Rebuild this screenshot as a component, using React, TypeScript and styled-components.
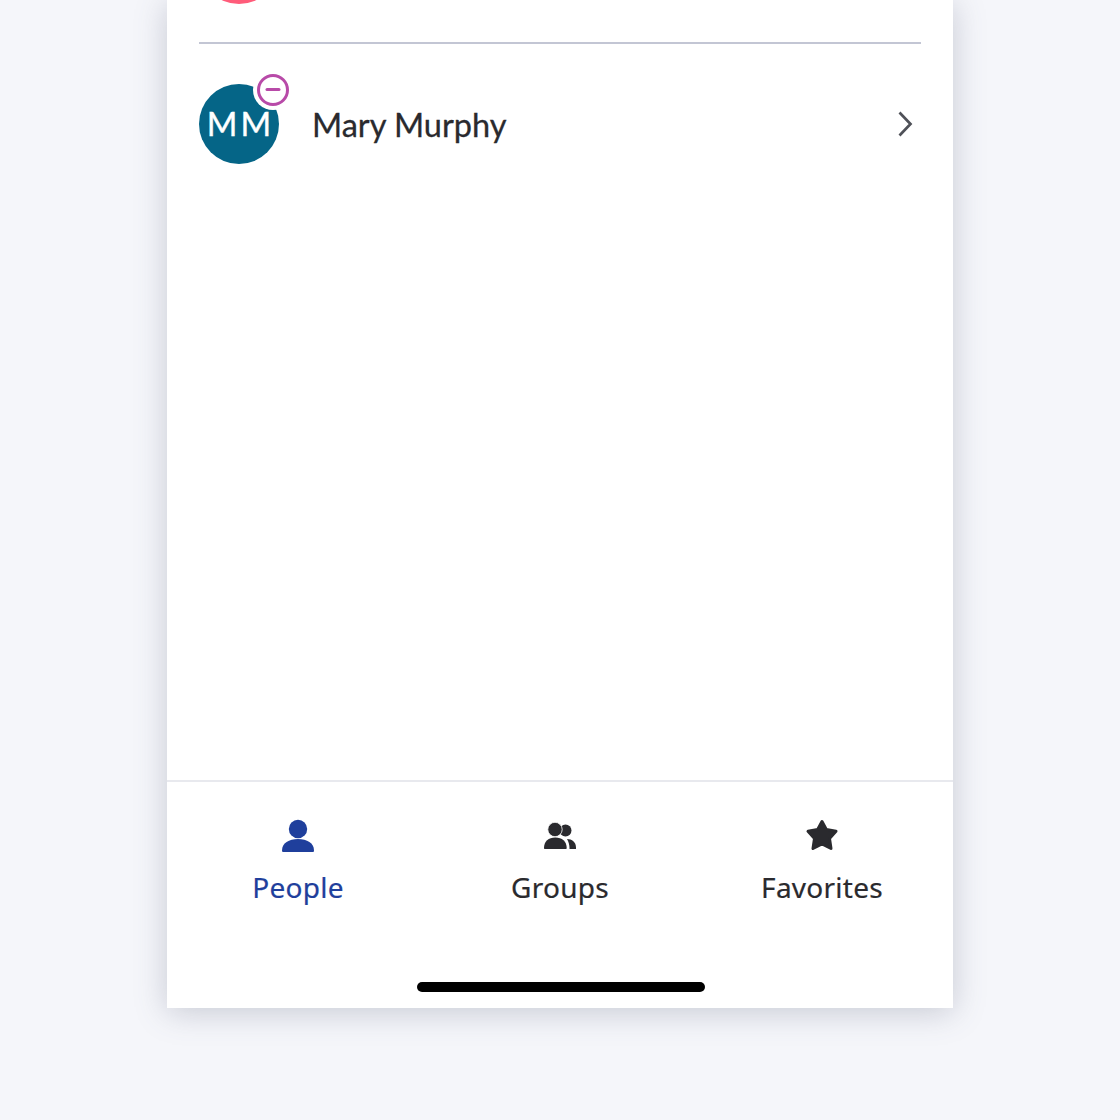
import styled, { createGlobalStyle } from 'styled-components';

const GlobalStyle = createGlobalStyle`
  html, body {
    margin: 0;
    padding: 0;
    height: 100%;
    background: #f5f6fa;
  }
`;

const App = () => {
  return (
    <>
      <GlobalStyle />
      <Page>
        <Phone>
          <List>
            <Row $divided>
              <Avatar $color="#ff5c7a" />
            </Row>
            <Row>
              <Avatar $color="#056587">
                MM
                <StatusBadge>
                  <svg width="32" height="32" viewBox="0 0 32 32">
                    <circle cx="16" cy="16" r="14.5" fill="#fff" stroke="#b84aa8" strokeWidth="3" />
                    <path d="M10 15.500h12" stroke="#b84aa8" strokeWidth="3" strokeLinecap="round" />
                  </svg>
                </StatusBadge>
              </Avatar>
              <Name>Mary Murphy</Name>
              <Chevron width="18" height="26" viewBox="0 0 18 26">
                <path d="M2.500 1.500 L13.500 13 L2.500 24.500" fill="none" stroke="#4f5158" strokeWidth="2.700" />
              </Chevron>
            </Row>
          </List>
          <TabBar>
            <Tabs>
              <Tab $active>
                <svg width="32" height="34" viewBox="0 0 32 34" fill="currentColor">
                  <circle cx="16" cy="11" r="9.200" />
                  <path d="M0 32.500C0 25 7 21 16 21s16 4 16 11.500c0 1-.5 1.500-1.500 1.500h-29C.5 34 0 33.500 0 32.500z" />
                </svg>
                <TabLabel>People</TabLabel>
              </Tab>
              <Tab>
                <svg width="32" height="34" viewBox="0 0 32 34" fill="currentColor">
                  <circle cx="21.500" cy="12.500" r="6" />
                  <path d="M23 21c5 0 9 3 9 8.500V31h-6.500v-1c0-3.500-1-6.500-2.500-9z" />
                  <circle cx="11" cy="11.500" r="7.200" stroke="#fff" strokeWidth=".8" />
                  <path d="M0 30c0-6.500 4.500-10.500 11.300-10.500S22.700 23.500 22.700 30c0 .7-.3 1-1 1H1c-.7 0-1-.3-1-1z" />
                </svg>
                <TabLabel>Groups</TabLabel>
              </Tab>
              <Tab>
                <svg width="34" height="34" viewBox="0 0 34 34" fill="currentColor">
                  <path
                    d="M17 3.500L21.300 11.500L31 13.300L24.500 20.500L26 30.500L17 26L8 30.500L9.500 20.500L3 13.300L12.700 11.500Z"
                    stroke="currentColor"
                    strokeWidth="3"
                    strokeLinejoin="round"
                  />
                </svg>
                <TabLabel>Favorites</TabLabel>
              </Tab>
            </Tabs>
            <HomeIndicator />
          </TabBar>
        </Phone>
      </Page>
    </>
  );
};

export default App;

const Page = styled.div`
  height: 1120px;
  overflow: hidden;
  display: flex;
  justify-content: center;
  align-items: flex-start;
  background: #f5f6fa;
`;

const Phone = styled.div`
  width: 786px;
  height: 1008px;
  background: #fff;
  box-shadow: 0 4px 30px rgba(80, 85, 115, 0.28);
  display: flex;
  flex-direction: column;
  overflow: hidden;
`;

const List = styled.div`
  flex: 1;
  margin-top: -118px;
  padding: 0 32px;
  display: flex;
  flex-direction: column;
`;

const Row = styled.div<{ $divided?: boolean }>`
  display: flex;
  align-items: center;
  height: 80px;
  flex-shrink: 0;
  padding: 40px 0;
  ${(p) => (p.$divided ? 'border-bottom: 2px solid #c3c6d4; padding: 42px 0 38px;' : '')}
`;

const Avatar = styled.div<{ $color: string }>`
  position: relative;
  width: 80px;
  height: 80px;
  flex-shrink: 0;
  border-radius: 50%;
  background: ${(p) => p.$color};
  color: #fff;
  display: flex;
  align-items: center;
  justify-content: center;
  padding-bottom: 2px;
  box-sizing: border-box;
  font-family: Lato, sans-serif;
  font-size: 33px;
  font-weight: 400;
  letter-spacing: 3px;
  text-indent: 3px;
  -webkit-text-stroke: 0.4px #fff;
`;

const StatusBadge = styled.div`
  position: absolute;
  top: -10px;
  right: -10px;
  width: 32px;
  height: 32px;
  border-radius: 50%;
  background: #fff;
  box-shadow: 0 0 0 4px #fff;
  display: flex;

  svg {
    display: block;
  }
`;

const Name = styled.div`
  flex: 1;
  margin-left: 33px;
  font-family: Lato, sans-serif;
  font-size: 32.5px;
  color: #2a2a2e;
  -webkit-text-stroke: 0.3px #2a2a2e;
`;

const Chevron = styled.svg`
  margin-right: 6px;
  flex-shrink: 0;
`;

const TabBar = styled.div`
  height: 226px;
  flex-shrink: 0;
  border-top: 2px solid #e8e9ee;
  display: flex;
  flex-direction: column;
  align-items: center;
`;

const Tabs = styled.div`
  width: 100%;
  display: grid;
  grid-template-columns: repeat(3, 1fr);
  padding: 36px 0 0;
  flex: 1;
`;

const Tab = styled.div<{ $active?: boolean }>`
  display: flex;
  flex-direction: column;
  align-items: center;
  gap: 16px;
  color: ${(p) => (p.$active ? '#1f3f9c' : '#2a2a2e')};

  svg {
    display: block;
  }
`;

const TabLabel = styled.span`
  font-family: 'Noto Sans', 'Open Sans', sans-serif;
  font-size: 28px;
  line-height: 38px;
  letter-spacing: 0.25px;
  -webkit-text-stroke: 0.2px currentColor;
`;

const HomeIndicator = styled.div`
  width: 288px;
  height: 10px;
  margin: 0 0 16px 2px;
  border-radius: 5px;
  background: #000;
`;
